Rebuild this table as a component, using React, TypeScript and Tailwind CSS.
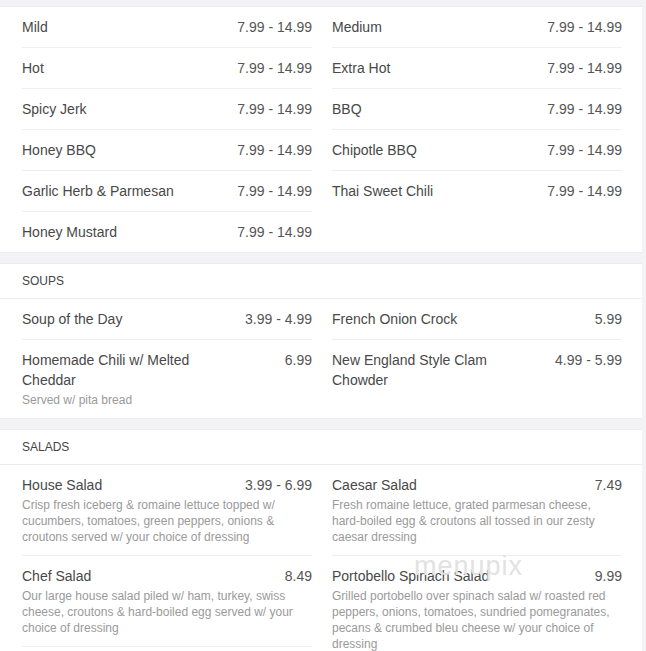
import React from "react";

type Item = { name: string; price: string; desc?: string; lineBelow?: boolean };

const sauces: [Item[], Item[]] = [
  [
    { name: "Mild", price: "7.99 - 14.99" },
    { name: "Hot", price: "7.99 - 14.99" },
    { name: "Spicy Jerk", price: "7.99 - 14.99" },
    { name: "Honey BBQ", price: "7.99 - 14.99" },
    { name: "Garlic Herb & Parmesan", price: "7.99 - 14.99" },
    { name: "Honey Mustard", price: "7.99 - 14.99" },
  ],
  [
    { name: "Medium", price: "7.99 - 14.99" },
    { name: "Extra Hot", price: "7.99 - 14.99" },
    { name: "BBQ", price: "7.99 - 14.99" },
    { name: "Chipotle BBQ", price: "7.99 - 14.99" },
    { name: "Thai Sweet Chili", price: "7.99 - 14.99" },
  ],
];

const soups: [Item[], Item[]] = [
  [
    { name: "Soup of the Day", price: "3.99 - 4.99" },
    {
      name: "Homemade Chili w/ Melted Cheddar",
      price: "6.99",
      desc: "Served w/ pita bread",
    },
  ],
  [
    { name: "French Onion Crock", price: "5.99" },
    { name: "New England Style Clam Chowder", price: "4.99 - 5.99" },
  ],
];

const salads: [Item[], Item[]] = [
  [
    {
      name: "House Salad",
      price: "3.99 - 6.99",
      desc: "Crisp fresh iceberg & romaine lettuce topped w/ cucumbers, tomatoes, green peppers, onions & croutons served w/ your choice of dressing",
    },
    {
      name: "Chef Salad",
      price: "8.49",
      desc: "Our large house salad piled w/ ham, turkey, swiss cheese, croutons & hard-boiled egg served w/ your choice of dressing",
      lineBelow: true,
    },
  ],
  [
    {
      name: "Caesar Salad",
      price: "7.49",
      desc: "Fresh romaine lettuce, grated parmesan cheese, hard-boiled egg & croutons all tossed in our zesty caesar dressing",
    },
    {
      name: "Portobello Spinach Salad",
      price: "9.99",
      desc: "Grilled portobello over spinach salad w/ roasted red peppers, onions, tomatoes, sundried pomegranates, pecans & crumbed bleu cheese w/ your choice of dressing",
    },
  ],
];

function Row({ item, first }: { item: Item; first: boolean }) {
  return (
    <div
      className={
        (first ? "py-[10px]" : "py-[10px] border-t border-[#eeeeee]") +
        (item.lineBelow ? " border-b" : "")
      }
    >
      <div className="flex items-start justify-between gap-4 text-[14px] leading-[20px] text-[#484848]">
        <span className="max-w-[200px]">{item.name}</span>
        <span className="shrink-0 text-[#555]">{item.price}</span>
      </div>
      {item.desc && (
        <p className="mt-[2px] text-[12px] leading-[16px] text-[#9a9a9a]">{item.desc}</p>
      )}
    </div>
  );
}

function Columns({ cols }: { cols: [Item[], Item[]] }) {
  return (
    <div className="grid grid-cols-[290px_290px] gap-x-[20px] px-[22px] items-start">
      {cols.map((col, ci) => (
        <div key={ci}>
          {col.map((it, i) => (
            <Row key={it.name} item={it} first={i === 0} />
          ))}
        </div>
      ))}
    </div>
  );
}

function Card({ title, cols }: { title?: string; cols: [Item[], Item[]] }) {
  return (
    <section className="w-[642px] bg-white border-y border-[#ebebee]">
      {title && (
        <div className="h-[35px] flex items-center px-[22px] border-b border-[#ececef] text-[12px] text-[#444] uppercase">
          {title}
        </div>
      )}
      <Columns cols={cols} />
    </section>
  );
}

export default function App() {
  return (
    <div
      className="relative min-h-screen bg-[#f3f3f5] pt-[6px] flex flex-col gap-[10px]"
      style={{ fontFamily: '"Liberation Sans", Arial, sans-serif' }}
    >
      <Card cols={sauces} />
      <Card title="Soups" cols={soups} />
      <Card title="Salads" cols={salads} />
      {/* watermark */}
      <span className="absolute left-[414px] top-[550px] text-[27px] leading-[32px] tracking-[1px] text-[#e2e2e2] pointer-events-none select-none">
        menupix
      </span>
    </div>
  );
}
